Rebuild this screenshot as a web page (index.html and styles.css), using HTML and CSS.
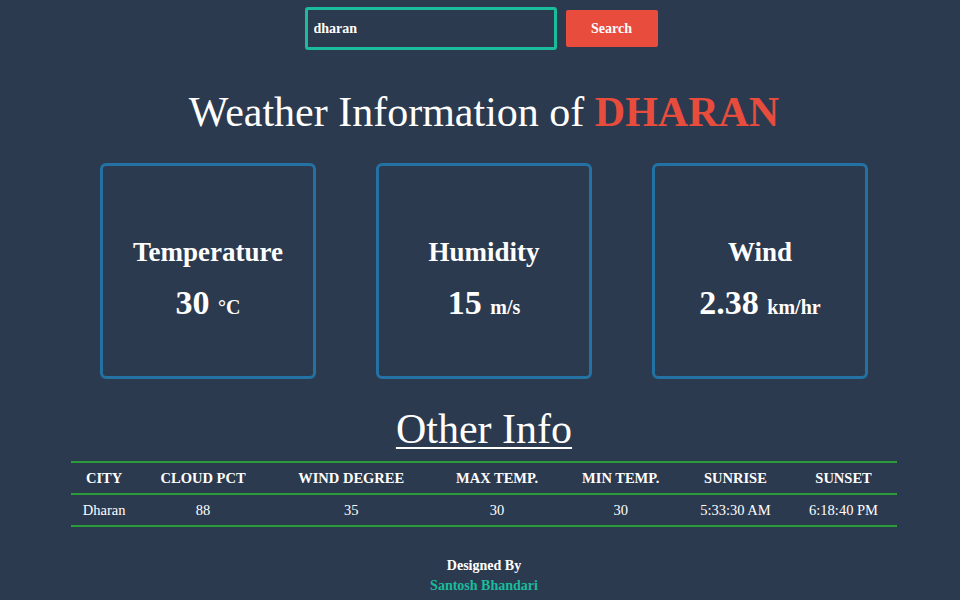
FILE: index.html
```html
<!DOCTYPE html>
<html>
<head>
<meta charset="utf-8">
<link rel="stylesheet" href="styles.css">
</head>
<body>
<div class="page">
  <form class="search">
    <input class="search-input" type="text" value="dharan">
    <button class="search-btn" type="button">Search</button>
  </form>
  <h1 class="title">Weather Information of <span class="city">DHARAN</span></h1>
  <div class="cards">
    <div class="card">
      <div class="card-title">Temperature</div>
      <div class="card-value">30 <span class="unit">°C</span></div>
    </div>
    <div class="card">
      <div class="card-title">Humidity</div>
      <div class="card-value">15 <span class="unit">m/s</span></div>
    </div>
    <div class="card">
      <div class="card-title">Wind</div>
      <div class="card-value">2.38 <span class="unit">km/hr</span></div>
    </div>
  </div>
  <h2 class="other">Other Info</h2>
  <table class="info">
    <thead>
      <tr><th>CITY</th><th>CLOUD PCT</th><th>WIND DEGREE</th><th>MAX TEMP.</th><th>MIN TEMP.</th><th>SUNRISE</th><th>SUNSET</th></tr>
    </thead>
    <tbody>
      <tr><td>Dharan</td><td>88</td><td>35</td><td>30</td><td>30</td><td>5:33:30 AM</td><td>6:18:40 PM</td></tr>
    </tbody>
  </table>
  <footer class="footer">
    <div class="designed">Designed By</div>
    <div class="author">Santosh Bhandari</div>
  </footer>
</div>
</body>
</html>
```
FILE: styles.css
```css
html, body {
  margin: 0;
  padding: 0;
  background: #2c3a4f;
}
body {
  font-family: "Liberation Serif", "Times New Roman", serif;
  color: #ffffff;
}
.page {
  padding-left: 8px;
  display: flex;
  flex-direction: column;
  align-items: center;
}
.search {
  display: flex;
  align-items: center;
  gap: 9px;
  margin: 7px 6px 0 0;
}
.search-input {
  box-sizing: border-box;
  width: 252px;
  height: 43px;
  border: 3px solid #1abc9c;
  border-radius: 3px;
  background: #2c3a4f;
  color: #fff;
  font-family: "Liberation Serif", serif;
  font-weight: bold;
  font-size: 14px;
  padding: 0 6px;
  outline: none;
}
.search-btn {
  width: 92px;
  height: 37px;
  border: none;
  border-radius: 2px;
  background: #e74c3c;
  color: #fff;
  font-family: "Liberation Serif", serif;
  font-weight: bold;
  font-size: 14px;
}
.title {
  margin: 38px 0 0;
  font-size: 42px;
  font-weight: normal;
  line-height: 48px;
}
.city {
  color: #e74c3c;
  font-weight: bold;
}
.cards {
  display: flex;
  gap: 60px;
  margin-top: 27px;
}
.card {
  box-sizing: border-box;
  width: 216px;
  height: 216px;
  padding-top: 18px;
  border: 3px solid #2472a4;
  border-radius: 6px;
  display: flex;
  flex-direction: column;
  align-items: center;
  justify-content: center;
  font-weight: bold;
}
.card-title {
  font-size: 27px;
  line-height: 32px;
  margin-top: 2px;
}
.card-value {
  font-size: 34px;
  line-height: 38px;
  margin-top: 16px;
}
.unit {
  font-size: 20px;
}
.other {
  margin: 26px 0 0;
  font-size: 42px;
  font-weight: normal;
  line-height: 48px;
  text-decoration: underline;
  text-decoration-thickness: 2px;
  text-underline-offset: 4px;
}
.info {
  margin-top: 8px;
  width: 826px;
  border-collapse: collapse;
  font-size: 14.5px;
}
.info th, .info td {
  border-top: 2px solid #2a9d3a;
  border-bottom: 2px solid #2a9d3a;
  height: 30px;
  padding: 0;
  text-align: center;
}
.info th {
  font-weight: bold;
}
.footer {
  margin-top: 29px;
  text-align: center;
  font-weight: bold;
  font-size: 14px;
  line-height: 20px;
}
.author {
  color: #1abc9c;
}
```
